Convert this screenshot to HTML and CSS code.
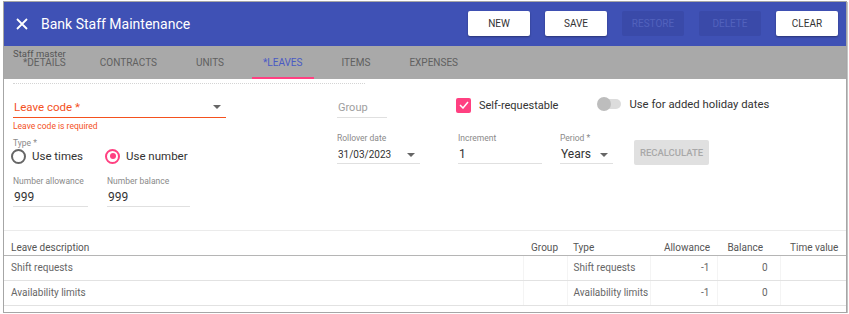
FILE: index.html
```html
<!DOCTYPE html>
<html lang="en">
<head>
    <meta charset="UTF-8">
    <title>Bank Staff Maintenance</title>
    <link rel="stylesheet" href="styles.css">
</head>
<body>
    <div class="window">
        <div class="toolbar">
            <svg class="close-icon" width="12" height="12" viewBox="0 0 12 12">
                <path d="M1 1 L11 11 M11 1 L1 11" stroke="#fff" stroke-width="1.8" fill="none"/>
            </svg>
            <h1 class="title">Bank Staff Maintenance</h1>
            <div class="actions">
                <button class="btn">NEW</button>
                <button class="btn">SAVE</button>
                <button class="btn btn-disabled">RESTORE</button>
                <button class="btn btn-disabled">DELETE</button>
                <button class="btn">CLEAR</button>
            </div>
        </div>

        <div class="tabbar">
            <span class="tabbar-caption">Staff master</span>
            <div class="tabs">
                <div class="tab">*DETAILS</div>
                <div class="tab">CONTRACTS</div>
                <div class="tab">UNITS</div>
                <div class="tab active">*LEAVES</div>
                <div class="tab">ITEMS</div>
                <div class="tab">EXPENSES</div>
            </div>
        </div>

        <div class="form">
            <div class="dotted"></div>
            <div class="form-body">
                <div class="left-panel">
                    <div class="field select error wide">
                        <span class="value">Leave code *</span>
                        <span class="arrow"></span>
                    </div>
                    <div class="error-text">Leave code is required</div>
                    <div class="small-label type-label">Type *</div>
                    <div class="radios">
                        <label class="radio"><span class="circle"></span>Use times</label>
                        <label class="radio checked"><span class="circle"></span>Use number</label>
                    </div>
                    <div class="row numbers">
                        <div class="stack w75">
                            <div class="small-label">Number allowance</div>
                            <div class="field"><span class="value">999</span></div>
                        </div>
                        <div class="stack w83">
                            <div class="small-label">Number balance</div>
                            <div class="field"><span class="value">999</span></div>
                        </div>
                    </div>
                </div>

                <div class="right-panel">
                    <div class="row top-row">
                        <div class="field group-field"><span class="value placeholder">Group</span></div>
                        <label class="checkbox">
                            <span class="box">
                                <svg width="10" height="8" viewBox="0 0 10 8"><path d="M1 4 L4 7 L9 1" stroke="#fff" stroke-width="1.5" fill="none"/></svg>
                            </span>
                            Self-requestable
                        </label>
                        <label class="toggle"><span class="track"><span class="thumb"></span></span>Use for added holiday dates</label>
                    </div>
                    <div class="row second-row">
                        <div class="stack w83">
                            <div class="small-label">Rollover date</div>
                            <div class="field select"><span class="value date">31/03/2023</span><span class="arrow"></span></div>
                        </div>
                        <div class="stack w84">
                            <div class="small-label">Increment</div>
                            <div class="field"><span class="value">1</span></div>
                        </div>
                        <div class="stack w53">
                            <div class="small-label">Period *</div>
                            <div class="field select"><span class="value">Years</span><span class="arrow"></span></div>
                        </div>
                        <button class="recalc">RECALCULATE</button>
                    </div>
                </div>
            </div>
        </div>

        <table class="grid">
            <colgroup>
                <col style="width: 519px">
                <col style="width: 44px">
                <col style="width: 83px">
                <col style="width: 67px">
                <col style="width: 63px">
                <col>
            </colgroup>
            <thead>
                <tr>
                    <th>Leave description</th>
                    <th class="num group-col">Group</th>
                    <th class="type-col">Type</th>
                    <th class="num">Allowance</th>
                    <th class="num bal-head">Balance</th>
                    <th class="time-col">Time value</th>
                </tr>
            </thead>
            <tbody>
                <tr>
                    <td>Shift requests</td>
                    <td></td>
                    <td class="type-col">Shift requests</td>
                    <td class="num">-1</td>
                    <td class="num bal">0</td>
                    <td></td>
                </tr>
                <tr>
                    <td>Availability limits</td>
                    <td></td>
                    <td class="type-col">Availability limits</td>
                    <td class="num">-1</td>
                    <td class="num bal">0</td>
                    <td></td>
                </tr>
            </tbody>
        </table>
    </div>
</body>
</html>
```

FILE: styles.css
```css
body {
    margin: 0;
    background: #fff;
    font-family: Roboto, "Liberation Sans", sans-serif;
    color: #333;
}
.window {
    margin: 1px 0 0 3px;
    width: 842px;
    height: 310px;
    border: 1px solid #a6a6a6;
    box-shadow: 1px 1px 0 #c4c4c4;
    overflow: hidden;
}
.toolbar {
    height: 44px;
    background: #3f51b5;
    display: flex;
    align-items: center;
    padding: 0 8px 0 12px;
}
.close-icon {
    margin-right: 13px;
}
.title {
    margin: 0;
    color: #fff;
    font-size: 14px;
    font-weight: 400;
    flex: 1;
}
.actions {
    display: flex;
    gap: 15px;
    margin-top: -2px;
}
.btn {
    width: 62px;
    height: 25px;
    border: none;
    border-radius: 2px;
    background: #fff;
    color: #333;
    font-family: inherit;
    font-size: 10px;
    font-weight: 400;
    box-shadow: 0 1px 2px rgba(0, 0, 0, 0.35);
    padding: 0;
}
.btn-disabled {
    background: #3a4aa9;
    color: #5262bd;
    box-shadow: none;
}
.tabbar {
    position: relative;
    height: 33px;
    background: #a9a9a9;
}
.tabbar-caption {
    position: absolute;
    left: 9px;
    top: 2px;
    font-size: 9.5px;
    color: #555;
}
.tabs {
    display: flex;
    padding-left: 8px;
    height: 33px;
}
.tab {
    padding: 0 11px;
    line-height: 33px;
    height: 31px;
    font-size: 10px;
    color: #606060;
    margin-right: 17px;
    border-bottom: 2px solid transparent;
}
.tab:first-child {
    margin-right: 12px;
}
.tab.active {
    color: #4a5ac4;
    border-bottom-color: #ff4081;
}
.form {
    height: 151px;
    padding: 0 9px;
    overflow: hidden;
}
.dotted {
    width: 352px;
    border-top: 1px dotted #d4d4d4;
    margin-top: 4px;
}
.form-body {
    display: flex;
}
.left-panel {
    width: 324px;
    padding-top: 13px;
}
.right-panel {
    flex: 1;
    padding-top: 12px;
}
.row {
    display: flex;
    align-items: flex-end;
}
.field {
    position: relative;
    border-bottom: 1px solid #e0e0e0;
    height: 20px;
    line-height: 20px;
    font-size: 12px;
    color: #333;
    white-space: nowrap;
}
.field .value {
    padding-left: 1px;
}
.field .date {
    font-size: 10px;
}
.placeholder {
    color: #9e9e9e;
    font-size: 11px;
}
.field.wide {
    width: 213px;
    font-size: 11.5px;
}
.field.error {
    color: #f4511e;
    border-bottom-color: #f4511e;
}
.arrow {
    position: absolute;
    right: 5px;
    top: 8px;
    border-left: 4px solid transparent;
    border-right: 4px solid transparent;
    border-top: 4px solid #666;
}
.error-text {
    margin-top: 3px;
    font-size: 8.5px;
    line-height: 11px;
    color: #f4511e;
}
.small-label {
    font-size: 8.5px;
    color: #8a8a8a;
    line-height: 11px;
    white-space: nowrap;
}
.type-label {
    margin-top: 6px;
}
.radios {
    display: flex;
    height: 16px;
    align-items: center;
    margin-top: -1px;
}
.radio {
    display: flex;
    align-items: center;
    font-size: 11.5px;
    color: #333;
    margin-right: 24px;
}
.radio .circle {
    width: 11px;
    height: 11px;
    border: 2px solid #666;
    border-radius: 50%;
    margin: 0 6px 0 -2px;
    position: relative;
}
.radio.checked .circle {
    border-color: #ff4081;
}
.radio.checked .circle::after {
    content: "";
    position: absolute;
    left: 2.5px;
    top: 2.5px;
    width: 6px;
    height: 6px;
    border-radius: 50%;
    background: #ff4081;
}
.numbers {
    margin-top: 12px;
    gap: 19px;
}
.stack .small-label {
    margin-bottom: 1px;
}
.stack .field {
    height: 18px;
    line-height: 18px;
}
.w75 { width: 75px; }
.w83 { width: 83px; }
.w84 { width: 84px; }
.w53 { width: 53px; }
.top-row {
    align-items: flex-start;
    height: 22px;
}
.group-field {
    width: 50px;
    margin-top: 1px;
}
.checkbox {
    display: flex;
    align-items: center;
    height: 16px;
    margin-top: 1px;
    margin-left: 69px;
    font-size: 11px;
    color: #333;
}
.checkbox .box {
    width: 15px;
    height: 15px;
    border-radius: 2px;
    background: #ff4081;
    display: flex;
    align-items: center;
    justify-content: center;
    margin-right: 8px;
}
.toggle {
    display: flex;
    align-items: center;
    height: 16px;
    margin-left: 39px;
    font-size: 11.3px;
    color: #333;
}
.toggle .track {
    position: relative;
    width: 23px;
    height: 10px;
    border-radius: 5px;
    background: #dcdcdc;
    margin: 0 8px 0 1px;
}
.toggle .thumb {
    position: absolute;
    left: -1px;
    top: -2px;
    width: 14px;
    height: 14px;
    border-radius: 50%;
    background: #bdbdbd;
}
.second-row {
    margin-top: 15px;
}
.second-row .stack {
    margin-right: 38px;
}
.second-row .stack.w84 {
    margin-right: 18px;
}
.second-row .stack.w53 {
    margin-right: 21px;
}
.recalc {
    width: 75px;
    height: 25px;
    border: none;
    border-radius: 2px;
    background: #e0e0e0;
    color: #a8a8a8;
    font-family: inherit;
    font-size: 9.5px;
    font-weight: 500;
    padding: 0;
    margin-bottom: -1px;
}
.grid {
    width: 100%;
    border-collapse: collapse;
    table-layout: fixed;
    font-size: 10px;
    border-top: 1px solid #ebebeb;
    white-space: nowrap;
}
.grid th {
    font-weight: 400;
    color: #555;
    text-align: left;
    line-height: 14px;
    padding: 10px 0 0 7px;
    border-bottom: 1px solid #b5b5b5;
}
.grid td {
    color: #666;
    line-height: 24px;
    padding: 0 0 0 7px;
    border-bottom: 1px solid #e2e2e2;
    border-left: 1px solid #f4f4f4;
}
.grid td:first-child {
    border-left: none;
}
.grid .num {
    text-align: right;
    padding-left: 0;
    padding-right: 7px;
}
.grid .group-col {
    padding-right: 9px;
}
.grid .type-col {
    padding-left: 6px;
}
.grid .bal-head {
    padding-right: 17px;
}
.grid .bal {
    padding-right: 12px;
}
.grid .time-col {
    padding-left: 10px;
}
```
